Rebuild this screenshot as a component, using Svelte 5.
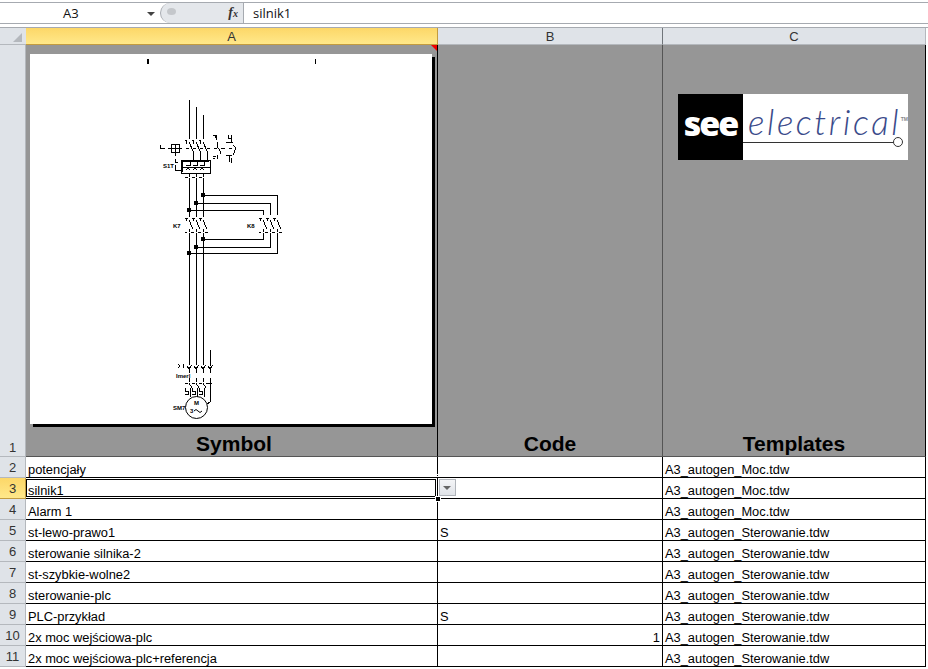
<script>
	const rows = [
		{ n: 2, a: 'potencjały', b: '', c: 'A3_autogen_Moc.tdw' },
		{ n: 3, a: 'silnik1', b: '', c: 'A3_autogen_Moc.tdw', active: true },
		{ n: 4, a: 'Alarm 1', b: '', c: 'A3_autogen_Moc.tdw' },
		{ n: 5, a: 'st-lewo-prawo1', b: 'S', c: 'A3_autogen_Sterowanie.tdw' },
		{ n: 6, a: 'sterowanie silnika-2', b: '', c: 'A3_autogen_Sterowanie.tdw' },
		{ n: 7, a: 'st-szybkie-wolne2', b: '', c: 'A3_autogen_Sterowanie.tdw' },
		{ n: 8, a: 'sterowanie-plc', b: '', c: 'A3_autogen_Sterowanie.tdw' },
		{ n: 9, a: 'PLC-przykład', b: 'S', c: 'A3_autogen_Sterowanie.tdw' },
		{ n: 10, a: '2x moc wejściowa-plc', b: '1', c: 'A3_autogen_Sterowanie.tdw', num: true },
		{ n: 11, a: '2x moc wejściowa-plc+referencja', b: '', c: 'A3_autogen_Sterowanie.tdw' }
	];
	// phase lines of the schematic
	const phases = [189, 196, 203];
	const phases2 = [263, 270, 277];
	const nodes = [[203, 195], [196, 203], [189, 210], [203, 239], [196, 247], [189, 253]];
</script>

<main class="excel">
	<div class="formula-bar">
		<div class="name-box">
			<span class="name">A3</span>
			<span class="name-arrow"></span>
		</div>
		<div class="grip">
			<span class="dot"></span>
			<span class="fx">f<sub>x</sub></span>
		</div>
		<div class="formula">silnik1</div>
	</div>

	<div class="sheet">
		<div class="corner"><span class="tri"></span></div>
		<div class="col-head active">A</div>
		<div class="col-head">B</div>
		<div class="col-head">C</div>

		<div class="row-head tall">1</div>
		<div class="cell title a">
			<span class="comment"></span>
			<div class="drawing">
				<svg width="402" height="370" viewBox="30 54 402 370" fill="none" stroke="#000" stroke-width="1" shape-rendering="crispEdges">
					<path d="M147 59v5M315 59v5" />
					<path d="M148 59v5" />

					<!-- main lines down to the overload -->
					<path d="M189 100V139M196 107V139M203 115V139" />
					{#each phases as x}
						<path d="M{x - 4} 140h2M{x - 3} 140v4M{x} 142l4 9M{x + 4} 151v9" />
						<path d="M{x} 173v4M{x - 4} 177h3M{x} 178V216" />
					{/each}
					<path d="M160 145v3h5M168 148h3M179 148h3M186 148h3M193 148h3M200 148h3M207 148h3M214 148h3M221 148h4M229 148h3" />

					<!-- motor breaker -->
					<rect x="171" y="144" width="8" height="8" />
					<path d="M175 144v8M171 148h8" />
					<path d="M175 153v3M175 159v3M175 165v5M175 162h3M175 170h6" />
					<rect x="181" y="160" width="29" height="13" />
					<path d="M182 161h27M182 161v11M181 167h29" />
					{#each [186, 193, 200] as x}
						<path d="M{x} 165h4v-4h3" />
						<path d="M{x} 170l2 -2l2 2" />
					{/each}

					<!-- auxiliary contacts -->
					<path d="M213 135h3v5M215 135v3M217 142v4M217 146l3 5M220 151v3M217 155v4M213 156h3M213 158h2" />
					<path d="M228 135v3h3M231 135v7M226 142h7M233 145l3 3l-3 7M226 155h6M229 155v7M231 158v5" />

					<!-- reversing bridge -->
					<path d="M203 195H277V215M277 233V253H189" />
					<path d="M196 203H270V215M270 233V247H196" />
					<path d="M189 210H263V215M263 233V239H203" />
					{#each phases as x}
						<path d="M{x} 216v1M{x - 4} 218h3M{x - 3} 218v3M{x} 220l3 7M{x + 3} 227v2M{x - 4} 232h2M{x} 229v3M{x + 2} 232h3M{x} 233V365" />
					{/each}
					{#each phases2 as x}
						<path d="M{x - 4} 218h3M{x - 3} 218v3M{x} 220l3 7M{x + 3} 227v2M{x - 4} 232h2M{x} 229v3M{x + 2} 232h3" />
					{/each}
					{#each nodes as [x, y]}
						<rect x={x - 2} y={y - 2} width="4" height="4" fill="#000" stroke="none" />
					{/each}

					<!-- fuses and thermal relay above the motor -->
					<path d="M210 350V366" />
					{#each [189, 196, 203, 210] as x}
						<path d="M{x - 2} 366l2 3l3 -4M{x} 369v4" />
					{/each}
					<path d="M178 364l2 2l-2 2M183 364v4" />
					{#each [189, 196, 203] as x}
						<path d="M{x} 378v4M{x - 4} 383h3M{x} 383l3 5M{x - 4} 388v3h3v3h-3" />
						<path d="M{x + 1} 388v9" />
					{/each}
					<path d="M210 378V402L207 404M206 383h6" />
					<circle cx="196.5" cy="407.5" r="11" shape-rendering="auto" />
					<text x="194" y="405" class="tiny b">M</text>
					<text x="190" y="413" class="tiny b">3</text>
					<path d="M194 411q2 -3 4 0t4 0" shape-rendering="auto" />

					<text x="163" y="168" class="tiny b">S1T</text>
					<text x="173" y="228" class="tiny b">K7</text>
					<text x="247" y="228" class="tiny b">K8</text>
					<text x="176" y="378" class="tiny b">Imerl</text>
					<text x="173" y="410" class="tiny b">SM7</text>
				</svg>
			</div>
			<b>Symbol</b>
		</div>
		<div class="cell title b"><b>Code</b></div>
		<div class="cell title c">
			<div class="logo">
				<div class="see">see</div>
				<div class="word">
					<span class="electrical">electrical</span><span class="tm">TM</span>
					<span class="rule"></span>
					<span class="ring"></span>
				</div>
			</div>
			<b>Templates</b>
		</div>

		{#each rows as r}
			<div class="row-head" class:active={r.active}>{r.n}</div>
			<div class="cell a" class:selected={r.active}>
				{r.a}
				{#if r.active}
					<span class="ring-in"></span>
					<span class="handle top"></span>
					<span class="handle bottom"></span>
				{/if}
			</div>
			<div class="cell b" class:num={r.num}>
				{r.b}
				{#if r.active}
					<span class="drop"><span></span></span>
				{/if}
			</div>
			<div class="cell c">{r.c}</div>
		{/each}
	</div>
</main>

<style>
	:global(body) {
		margin: 0;
		background: #fff;
	}
	.excel {
		width: 928px;
		height: 669px;
		overflow: hidden;
		font-family: "Liberation Sans", Arial, sans-serif;
	}
	.formula-bar {
		display: flex;
		height: 20px;
		margin-top: 2px;
		border-top: 1px solid #a6aab0;
		border-bottom: 1px solid #a6aab0;
		background: #fff;
		margin-bottom: 3px;
	}
	.name-box {
		width: 160px;
		display: flex;
		align-items: center;
		position: relative;
	}
	.name {
		margin-left: 63px;
		font: 13px "Open Sans", sans-serif;
		color: #111;
	}
	.name-arrow {
		position: absolute;
		left: 147px;
		top: 9px;
		border: 4px solid transparent;
		border-top-color: #444;
		border-bottom: 0;
	}
	.grip {
		width: 84px;
		box-sizing: border-box;
		display: flex;
		justify-content: flex-end;
		background: #e4e7eb;
		border-radius: 10px 0 0 10px;
		border-left: 1px solid #a6aab0;
		border-right: 1px solid #a6aab0;
		position: relative;
		padding-right: 5px;
	}
	.dot {
		position: absolute;
		left: 6px;
		top: 5px;
		width: 9px;
		height: 7px;
		border-radius: 50%;
		background: #c4c7cb;
	}
	.fx {
		font: italic bold 14px/19px "Liberation Serif", serif;
		color: #333;
	}
	.fx sub {
		font-size: 10px;
		vertical-align: baseline;
	}
	.formula {
		flex: 1;
		padding-left: 9px;
		font: 13px/20px "Open Sans", sans-serif;
		color: #111;
	}
	.sheet {
		display: grid;
		grid-template-columns: 26px 412px 225px 263px;
		grid-template-rows: 17px 412px repeat(10, 21px);
		border-top: 1px solid #a6aab0;
	}
	.corner, .col-head, .row-head {
		background: #dfe3e8;
		color: #333;
		font-size: 13px;
		display: flex;
		align-items: center;
		justify-content: center;
		box-sizing: border-box;
		border-right: 1px solid #b4b8bd;
		border-bottom: 1px solid #b4b8bd;
	}
	.corner {
		position: relative;
		border-right: 0;
	}
	.tri {
		position: absolute;
		right: 4px;
		bottom: 2px;
		border-left: 9px solid transparent;
		border-bottom: 9px solid #b4b8bd;
	}
	.col-head:nth-child(3) {
		border-right-color: #70757a;
	}
	.col-head.active, .row-head.active {
		background: linear-gradient(#fcd768, #ffe88a);
		border-bottom: 1px solid #c29b3f;
		border-right: 1px solid #c29b3f;
	}
	.row-head.tall {
		align-items: flex-end;
		padding-bottom: 1px;
	}
	.cell {
		position: relative;
		box-sizing: border-box;
		border-right: 1px solid #000;
		border-bottom: 1px solid #000;
		font-size: 12.85px;
		padding: 4px 2px 0;
		color: #000;
		white-space: nowrap;
		line-height: 17px;
	}
	.cell.num {
		text-align: right;
	}
	.title {
		background: #969696;
		border-bottom-color: #555;
		border-right-color: #555;
		display: flex;
		flex-direction: column;
		justify-content: flex-end;
		align-items: center;
		padding: 0;
	}
	.title.a, .title.c {
		border-right-color: #000;
	}
	.title.a b {
		margin-left: 5px;
	}
	.title b {
		font-size: 21px;
		line-height: 24px;
	}
	.comment {
		position: absolute;
		right: 0;
		top: 0;
		border-left: 6px solid transparent;
		border-top: 6px solid #e00;
	}
	.drawing {
		position: absolute;
		left: 4px;
		top: 9px;
		width: 402px;
		height: 370px;
		background: #fff;
		box-shadow: 3px 3px 0 #000;
	}
	.drawing svg {
		display: block;
	}
	.tiny {
		font: 6px "Liberation Sans", sans-serif;
		fill: #000;
		stroke: none;
	}
	.tiny.b {
		font-weight: bold;
	}
	.logo {
		position: absolute;
		left: 15px;
		top: 49px;
		width: 230px;
		height: 66px;
		display: flex;
		background: #fff;
	}
	.see {
		width: 65px;
		background: #000;
		color: #fff;
		font: 800 34px/58px "Open Sans", sans-serif;
		text-align: center;
		letter-spacing: -2px;
	}
	.word {
		position: relative;
		flex: 1;
	}
	.electrical {
		position: absolute;
		left: 5px;
		top: 7px;
		font: italic 300 35px/40px "Lato", sans-serif;
		letter-spacing: 2.6px;
		color: #3a4a8a;
	}
	.tm {
		position: absolute;
		right: 0;
		top: 17px;
		font-size: 5px;
		font-weight: bold;
		color: #888;
	}
	.rule {
		position: absolute;
		left: 0;
		right: 14px;
		top: 48px;
		height: 1px;
		background: #333;
	}
	.ring {
		position: absolute;
		right: 5px;
		top: 43px;
		width: 8px;
		height: 8px;
		border: 1px solid #333;
		border-radius: 50%;
		background: #fff;
	}
	.ring-in {
		position: absolute;
		left: 0;
		right: 1px;
		top: 1px;
		bottom: 1px;
		border: 1px solid #000;
	}
	.handle {
		position: absolute;
		right: -3px;
		width: 4px;
		height: 4px;
		background: #000;
		outline: 1px solid #fff;
		z-index: 1;
	}
	.handle.top {
		top: -3px;
		width: 1px;
		height: 1px;
		right: -1px;
	}
	.handle.bottom {
		bottom: -3px;
	}
	.drop {
		position: absolute;
		left: 1px;
		top: 1px;
		width: 17px;
		height: 17px;
		box-sizing: border-box;
		background: linear-gradient(#f4f5f7, #e0e3e8);
		border: 1px solid #b0b4ba;
	}
	.drop span {
		position: absolute;
		left: 3px;
		top: 6px;
		border: 4px solid transparent;
		border-top-color: #666;
		border-bottom: 0;
	}
</style>
